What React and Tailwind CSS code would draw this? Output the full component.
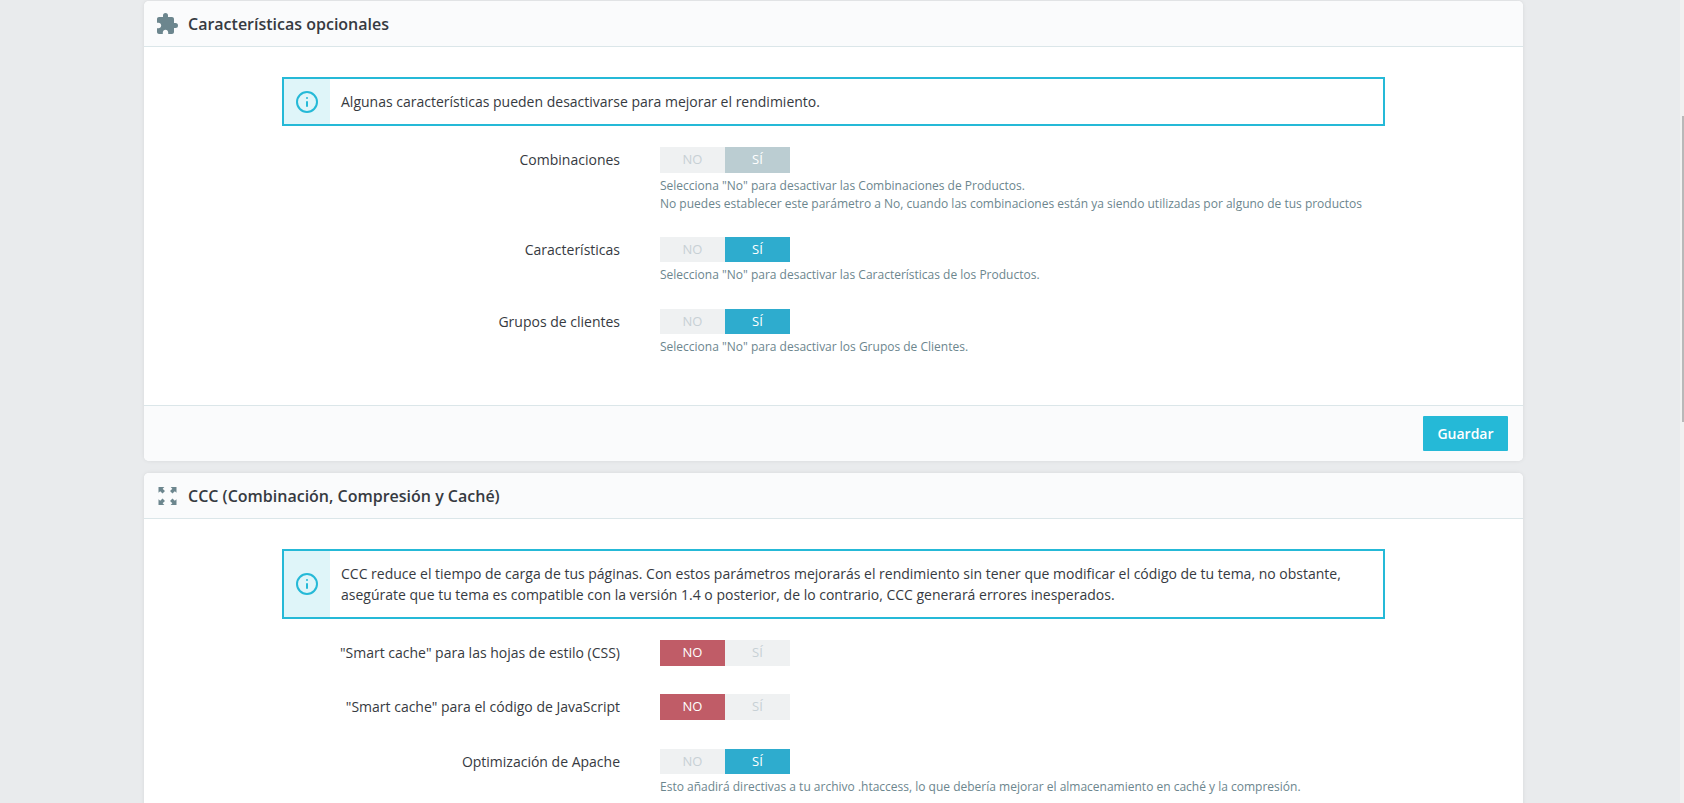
import { MdExtension } from "react-icons/md";
import { Info } from "lucide-react";

// Corner arrows used in the CCC panel header
function ExpandIcon() {
  return (
    <svg width="19" height="18" viewBox="0 0 20 20" fill="#6c868e">
      <path d="M0 0h6.5L4.6 1.9 7.2 4.5 4.5 7.2 1.9 4.6 0 6.5z" />
      <path d="M20 0h-6.5l1.9 1.9-2.6 2.6 2.7 2.7 2.6-2.6L20 6.5z" />
      <path d="M0 20h6.5l-1.9-1.9 2.6-2.6-2.7-2.7-2.6 2.6L0 13.5z" />
      <path d="M20 20h-6.5l1.9-1.9-2.6-2.6 2.7-2.7 2.6 2.6 1.9-1.9z" />
    </svg>
  );
}

function Switch({ value, disabled, h = "h-[25px]" }) {
  const onClass = disabled ? "bg-[#bbcdd2]" : "bg-[#2eacce]";
  return (
    <div className={`flex w-[130px] text-[13px] font-medium ${h}`}>
      <div
        className={`flex w-[65px] items-center justify-center ${
          value === "no" ? "bg-[#c05c67] text-white" : "bg-[#eff1f2] text-[#c7d0d5]"
        }`}
      >
        NO
      </div>
      <div
        className={`flex w-[65px] items-center justify-center ${
          value === "si" ? `${onClass} text-white` : "bg-[#eff1f2] text-[#c7d0d5]"
        }`}
      >
        SÍ
      </div>
    </div>
  );
}

function Row({ label, value, disabled, help = [], h, className }) {
  return (
    <div className={`flex ${className}`}>
      <div className="w-[476px] pt-[3px] text-right text-[14px] leading-[19px] text-[#363a41]">{label}</div>
      <div className="ml-[40px]">
        <Switch value={value} disabled={disabled} h={h} />
        {help.length > 0 && (
          <div className="mt-[4px] text-[12px] leading-[18px] text-[#6c868e]">
            {help.map((line) => (
              <p key={line}>{line}</p>
            ))}
          </div>
        )}
      </div>
    </div>
  );
}

function InfoBox({ children, h }) {
  return (
    <div className={`mx-[138px] flex border-2 border-[#25b9d7] ${h}`}>
      <div className="flex w-[46px] items-center justify-center bg-[#dff5f9]">
        <Info size={24} strokeWidth={2} className="text-[#25b9d7]" />
      </div>
      <div className="flex flex-1 items-center pl-[11px] pr-[20px] text-[14px] leading-[21px] text-[#363a41]">
        <p>{children}</p>
      </div>
    </div>
  );
}

function CardHeader({ icon, title }) {
  return (
    <div className="flex h-[46px] items-center rounded-t-[5px] border-b border-[#dbe6e9] bg-[#fafbfc] pl-[11px]">
      <div className="flex w-[24px] items-center justify-center">{icon}</div>
      <h2 className="ml-[9px] text-[16px] font-semibold text-[#363a41]">{title}</h2>
    </div>
  );
}

export default function App() {
  return (
    <div className="flex h-screen overflow-hidden bg-[#e9ebed] font-['Open_Sans',sans-serif]">
      <main className="flex-1 overflow-hidden pl-[144px] pr-[157px] pt-[1px]">
        {/* Características opcionales */}
        <section className="h-[460px] rounded-[5px] bg-white shadow-[0_0_4px_rgba(0,0,0,0.08)]">
          <CardHeader icon={<MdExtension size={26} color="#6c868e" />} title="Características opcionales" />
          <div className="h-[358px] pt-[30px]">
            <InfoBox h="h-[49px]">Algunas características pueden desactivarse para mejorar el rendimiento.</InfoBox>
            <Row
              className="mt-[21px]"
              label="Combinaciones"
              value="si"
              disabled
              h="h-[26px]"
              help={[
                'Selecciona "No" para desactivar las Combinaciones de Productos.',
                "No puedes establecer este parámetro a No, cuando las combinaciones están ya siendo utilizadas por alguno de tus productos",
              ]}
            />
            <Row
              className="mt-[24px]"
              label="Características"
              value="si"
              help={['Selecciona "No" para desactivar las Características de los Productos.']}
            />
            <Row
              className="mt-[25px]"
              label="Grupos de clientes"
              value="si"
              help={['Selecciona "No" para desactivar los Grupos de Clientes.']}
            />
          </div>
          <div className="flex h-[56px] justify-end rounded-b-[5px] border-t border-[#dbe6e9] bg-[#fafbfc] pr-[15px] pt-[10px]">
            <button className="h-[35px] w-[85px] rounded-[1px] bg-[#25b9d7] text-[14px] font-semibold text-white">
              Guardar
            </button>
          </div>
        </section>

        {/* CCC */}
        <section className="mt-[12px] rounded-[5px] bg-white pb-[40px] shadow-[0_0_4px_rgba(0,0,0,0.08)]">
          <CardHeader icon={<ExpandIcon />} title="CCC (Combinación, Compresión y Caché)" />
          <div className="pt-[30px]">
            <InfoBox h="h-[70px]">
              CCC reduce el tiempo de carga de tus páginas. Con estos parámetros mejorarás el rendimiento sin tener que
              modificar el código de tu tema, no obstante, asegúrate que tu tema es compatible con la versión 1.4 o
              posterior, de lo contrario, CCC generará errores inesperados.
            </InfoBox>
            <Row className="mt-[21px]" label={'"Smart cache" para las hojas de estilo (CSS)'} value="no" h="h-[26px]" />
            <Row className="mt-[28px]" label={'"Smart cache" para el código de JavaScript'} value="no" h="h-[26px]" />
            <Row
              className="mt-[29px]"
              label="Optimización de Apache"
              value="si"
              help={[
                "Esto añadirá directivas a tu archivo .htaccess, lo que debería mejorar el almacenamiento en caché y la compresión.",
              ]}
            />
          </div>
        </section>
      </main>

      {/* Scrollbar */}
      <div className="w-[4px] shrink-0 bg-[#f1f1f1]">
        <div className="ml-auto mt-[116px] h-[306px] w-[2px] bg-[#b9b9b9]" />
      </div>
    </div>
  );
}
